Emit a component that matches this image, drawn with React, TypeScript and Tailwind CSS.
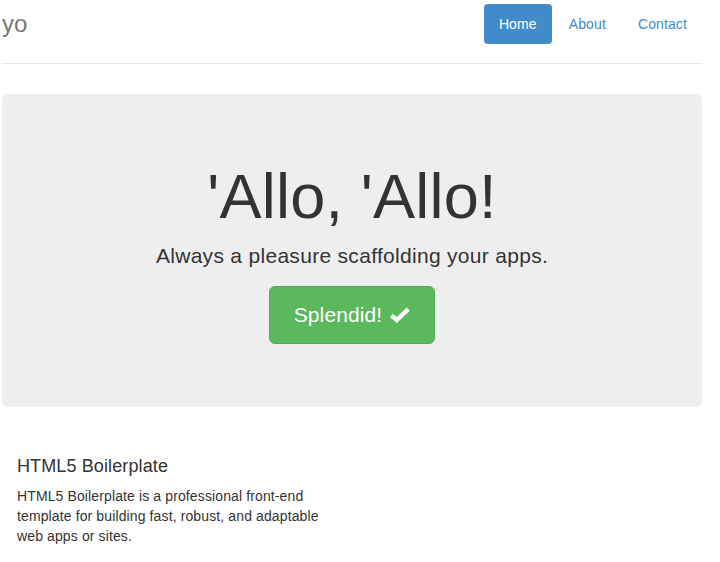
const NavPill = ({ label, active }: { label: string; active?: boolean }) => (
  <li>
    <a
      href="#"
      className={
        active
          ? "block rounded-[4px] bg-[#428bca] px-[15px] py-[10px] text-white"
          : "block rounded-[4px] px-[15px] py-[10px] text-[#428bca]"
      }
    >
      {label}
    </a>
  </li>
)

const OkIcon = () => (
  <svg width="21" height="16" viewBox="0 0 21 16" className="ml-[7px]">
    <polyline points="2.5,8.5 7.8,13 19.2,2.2" fill="none" stroke="white" strokeWidth="4.4" strokeLinejoin="miter" />
  </svg>
)

export default function App() {
  return (
    <div className="min-h-[562px] bg-white font-['Liberation_Sans',Arial,sans-serif] text-[14px] leading-[20px] tracking-[0.12px] text-[#333]">
      <div className="ml-[2px] w-[700px] pt-[4px]">
        <div className="flex items-start justify-between border-b border-[#e5e5e5] pb-[19px]">
          <h3 className="text-[24px] leading-[40px] text-[#777]">yo</h3>
          <ul className="flex gap-[2px]">
            <NavPill label="Home" active />
            <NavPill label="About" />
            <NavPill label="Contact" />
          </ul>
        </div>

        <div className="mt-[30px] rounded-[6px] bg-[#eee] px-[60px] pt-[48px] pb-[48px] text-center">
          <h1 className="mt-[20px] mb-[10px] text-[63px] leading-[1.1] tracking-[0.2px]">'Allo, 'Allo!</h1>
          <p className="mb-[15px] text-[21px] leading-[1.4] tracking-[0.3px]">Always a pleasure scaffolding your apps.</p>
          <p className="mb-[15px]">
            <a
              href="#"
              className="inline-flex items-center rounded-[6px] border border-[#4cae4c] bg-[#5cb85c] px-[24px] py-[14px] text-[21px] leading-[28px] text-white"
            >
              Splendid!
              <OkIcon />
            </a>
          </p>
        </div>

        <div className="mt-[40px] grid grid-cols-2">
          <div className="px-[15px]">
            <h4 className="mt-[10px] mb-[10px] text-[18px] leading-[1.1]">HTML5 Boilerplate</h4>
            <p>
              HTML5 Boilerplate is a professional front-end template for building fast, robust, and adaptable web apps or
              sites.
            </p>
          </div>
          <div className="px-[15px]" />
        </div>
      </div>
    </div>
  )
}
